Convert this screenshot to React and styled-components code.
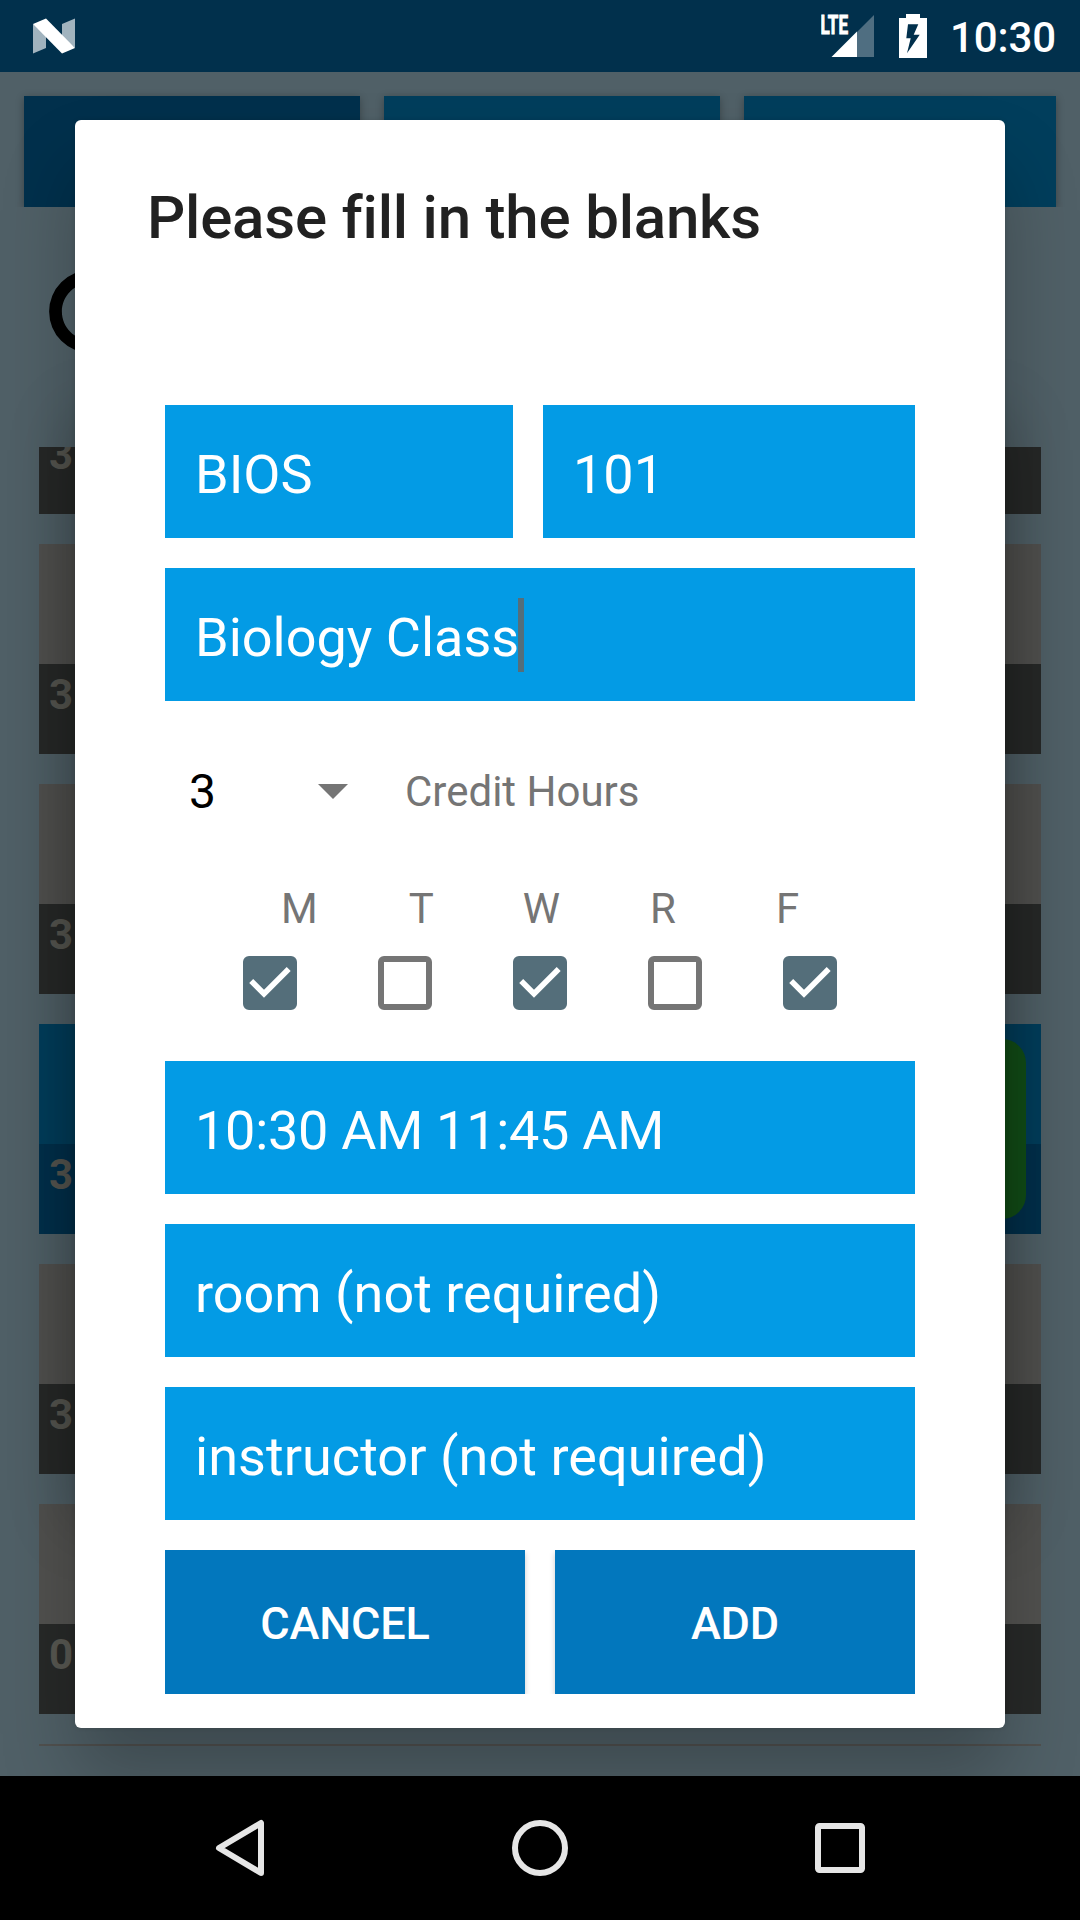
import React from "react";
import styled, { createGlobalStyle } from "styled-components";

const Global = createGlobalStyle`
  * { box-sizing: border-box; }
  body { margin: 0; background: #000; }
`;

const Screen = styled.div`
  position: relative;
  display: flex;
  flex-direction: column;
  width: 1080px;
  height: 1920px;
  overflow: hidden;
  font-family: Roboto, "Liberation Sans", sans-serif;
`;

const StatusBar = styled.header`
  position: relative;
  z-index: 2;
  display: flex;
  align-items: center;
  flex: none;
  height: 72px;
  padding: 0 24px 0 33px;
  background: #01304c;
  svg { display: block; flex: none; }
`;

const StatusIcons = styled.div`
  display: flex;
  align-items: center;
  gap: 25px;
  margin-left: auto;
`;

const Clock = styled.time`
  color: #fff;
  font-size: 42px;
  font-weight: 500;
  line-height: 72px;
  padding-top: 2px;
  height: 72px;
  margin-left: -2px;
  letter-spacing: -0.1px;
`;

const Page = styled.main`
  display: flex;
  flex-direction: column;
  flex: none;
  height: 1704px;
  padding-top: 24px;
  background: #506067;
`;

const Tabs = styled.nav`
  display: flex;
  gap: 24px;
  height: 111px;
  margin: 0 24px;
  clip-path: inset(-20px -20px 0 -20px);
`;

const Tab = styled.div`
  flex: 0 0 ${(p) => p.$width}px;
  background: ${(p) => (p.$active ? "#01304c" : "#013e5c")};
  box-shadow: 0 2px 8px rgba(0, 0, 0, 0.3);
`;

const SearchRow = styled.div`
  height: 240px;
  padding: 44px 0 0 30px;
`;

const List = styled.div`
  display: flex;
  flex-direction: column;
  justify-content: flex-end;
  gap: 30px;
  height: 1299px;
  margin: 0 39px;
  overflow: hidden;
`;

const Card = styled.article`
  position: relative;
  display: flex;
  flex-direction: column;
  flex: none;
  height: ${(p) => p.$height || 210}px;
  background: ${(p) => (p.$active ? "#013e5c" : "#51514f")};
  overflow: hidden;
`;

const CardFooter = styled.div`
  height: 90px;
  margin-top: auto;
  padding-left: 10px;
  background: ${(p) => (p.$active ? "#01304c" : "#272928")};
  color: #575751;
  font-size: 42px;
  font-weight: 700;
  line-height: 61px;
`;

const Badge = styled.div`
  position: absolute;
  top: 15px;
  right: 15px;
  width: 180px;
  height: 180px;
  border-radius: 24px;
  background: #124f17;
`;

const NavBar = styled.footer`
  position: relative;
  z-index: 2;
  display: flex;
  align-items: center;
  justify-content: space-between;
  height: 144px;
  padding: 0 210px;
  background: #000;
`;

const DialogGlow = styled.div`
  position: absolute;
  left: 75px;
  top: 420px;
  width: 930px;
  height: 1100px;
  box-shadow: 0 0 60px rgba(0, 0, 0, 0.26);
`;

const Dialog = styled.section`
  position: absolute;
  z-index: 1;
  left: 75px;
  top: 120px;
  width: 930px;
  height: 1608px;
  padding: 63px 90px 0;
  border-radius: 6px;
  background: #fff;
  box-shadow: 0 48px 75px rgba(0, 0, 0, 0.24), 0 0 5px rgba(0, 0, 0, 0.1);
`;

const Title = styled.h1`
  margin: 0 0 152px -18px;
  color: #212121;
  font-size: 60px;
  font-weight: 500;
  line-height: 70px;
  letter-spacing: -0.2px;
  font-variant-ligatures: common-ligatures;
`;

const FieldStack = styled.div`
  display: flex;
  flex-direction: column;
  gap: 30px;
`;

const FieldPair = styled.div`
  display: grid;
  grid-template-columns: 348px 372px;
  gap: 30px;
`;

const Field = styled.div`
  display: flex;
  align-items: center;
  height: 133px;
  padding: 5px 30px 0;
  background: #039be5;
  color: #fff;
  font-size: 54px;
  letter-spacing: ${(p) => p.$tracking || 0}px;
  white-space: nowrap;
`;

const Caret = styled.span`
  width: 6px;
  height: 74px;
  margin: -5px 0 0 -1px;
  background: #546e7a;
`;

const CreditRow = styled.div`
  display: flex;
  align-items: center;
  height: 181px;
  padding-left: 24px;
`;

const Hours = styled.span`
  width: 129px;
  color: #000;
  font-size: 48px;
`;

const Muted = styled.span`
  color: #757575;
  font-size: 42px;
  margin-left: ${(p) => p.$gap || 0}px;
`;

const DayNames = styled.div`
  display: flex;
  align-items: center;
  height: 53px;
  padding-left: 116px;
`;

const DayBoxes = styled.div`
  display: flex;
  gap: 81px;
  margin: 21px 0 51px;
  padding-left: 78px;
`;

const Box = styled.span`
  width: 54px;
  height: 54px;
  border: 6px solid ${(p) => (p.$checked ? "#546e7a" : "#757575")};
  border-radius: 6px;
  background: ${(p) => (p.$checked ? "#546e7a" : "#fff")};
  svg { display: block; }
`;

const Actions = styled.div`
  display: grid;
  grid-template-columns: 360px 360px;
  gap: 30px;
  height: 144px;
  overflow: hidden;
`;

const Action = styled.button`
  border: 0;
  padding: 3px 0 0;
  background: #0277bd;
  box-shadow: 0 3px 6px rgba(0, 0, 0, 0.2);
  color: #fff;
  font: 500 45px Roboto, "Liberation Sans", sans-serif;
  letter-spacing: -0.15px;
`;

const cards = [
  { hours: "3", height: 90 },
  { hours: "3" },
  { hours: "3" },
  { hours: "3", active: true },
  { hours: "3" },
  { hours: "0" },
];

const days = [
  { name: "M", gap: 0, checked: true },
  { name: "T", gap: 91, checked: false },
  { name: "W", gap: 89, checked: true },
  { name: "R", gap: 90, checked: false },
  { name: "F", gap: 100, checked: true },
];

export default function App() {
  return (
    <Screen>
      <Global />
      <StatusBar>
        <svg width="42" height="72" viewBox="33 0 42 72">
          <path d="M33 24l13 8v16l-13 5.5zM62 24l13-5.5V48L62 37z" fill="#a1b3be" />
          <path d="M33 24l13-5.5L75 48l-13 5.5z" fill="#fff" />
        </svg>
        <StatusIcons>
          <svg width="53" height="72" viewBox="821 0 53 72">
            <text x="820.5" y="33.5" fill="#fff" stroke="#fff" strokeWidth="0.9" fontSize="25" fontWeight="700" textLength="27.5" lengthAdjust="spacingAndGlyphs">LTE</text>
            <path d="M874 15v42h-17V32z" fill="#4f6e81" />
            <path d="M857 31.500V57h-25.500z" fill="#fff" />
          </svg>
          <svg width="28" height="72" viewBox="899 0 28 72">
            <path d="M906 14h14v4h7v40h-28V18h7z" fill="#fff" />
            <path d="M908 24.300h10.300l-4.600 10.400h6L907 53.300l3.700-15h-4.400z" fill="#01304c" />
          </svg>
          <Clock>10:30</Clock>
        </StatusIcons>
      </StatusBar>

      <Page>
        <Tabs>
          <Tab $width={336} $active />
          <Tab $width={336} />
          <Tab $width={312} />
        </Tabs>
        <SearchRow>
          <svg width="153" height="153" viewBox="0 0 24 24">
            <path d="M15.500 14h-.79l-.28-.27A6.471 6.471 0 0 0 16 9.500 6.500 6.500 0 1 0 9.500 16c1.610 0 3.090-.59 4.230-1.570l.27.28v.79l5 4.990L20.490 19l-4.990-5zm-6 0C7.010 14 5 11.990 5 9.500S7.010 5 9.500 5 14 7.010 14 9.500 11.990 14 9.500 14z" />
          </svg>
        </SearchRow>
        <List>
          {cards.map((c, i) => (
            <Card key={i} $height={c.height} $active={c.active}>
              <CardFooter $active={c.active}>{c.hours}</CardFooter>
              {c.active && <Badge />}
            </Card>
          ))}
          <Card $height={2} />
        </List>
      </Page>

      <DialogGlow />
      <Dialog>
        <Title>Please fill in the blanks</Title>
        <FieldStack>
          <FieldPair>
            <Field>BIOS</Field>
            <Field>101</Field>
          </FieldPair>
          <Field>
            Biology Class
            <Caret />
          </Field>
        </FieldStack>
        <CreditRow>
          <Hours>3</Hours>
          <svg width="30" height="15" viewBox="0 0 30 15">
            <path d="M0 0h30L15 15z" fill="#757575" />
          </svg>
          <Muted $gap={57}>Credit Hours</Muted>
        </CreditRow>
        <DayNames>
          {days.map((d) => (
            <Muted key={d.name} $gap={d.gap}>{d.name}</Muted>
          ))}
        </DayNames>
        <DayBoxes>
          {days.map((d) => (
            <Box key={d.name} $checked={d.checked}>
              {d.checked && (
                <svg width="42" height="42" viewBox="6 6 42 42">
                  <path d="M8.200 25L21 37.800L45.700 13" fill="none" stroke="#fff" strokeWidth="5.600" />
                </svg>
              )}
            </Box>
          ))}
        </DayBoxes>
        <FieldStack>
          <Field $tracking={-0.28}>10:30 AM 11:45 AM</Field>
          <Field>room (not required)</Field>
          <Field $tracking={0.05}>instructor (not required)</Field>
          <Actions>
            <Action>CANCEL</Action>
            <Action>ADD</Action>
          </Actions>
        </FieldStack>
      </Dialog>

      <NavBar>
        <svg width="60" height="60" viewBox="210 1818 60 60" fill="none" stroke="#e6e6e6" strokeWidth="6">
          <path d="M219 1848l42-25v50z" strokeLinejoin="round" />
        </svg>
        <svg width="60" height="60" viewBox="0 0 60 60" fill="none" stroke="#e6e6e6" strokeWidth="6">
          <circle cx="30" cy="30" r="25" />
        </svg>
        <svg width="60" height="60" viewBox="0 0 60 60" fill="none" stroke="#e6e6e6" strokeWidth="6">
          <rect x="8" y="8" width="44" height="44" rx="1.500" />
        </svg>
      </NavBar>
    </Screen>
  );
}
